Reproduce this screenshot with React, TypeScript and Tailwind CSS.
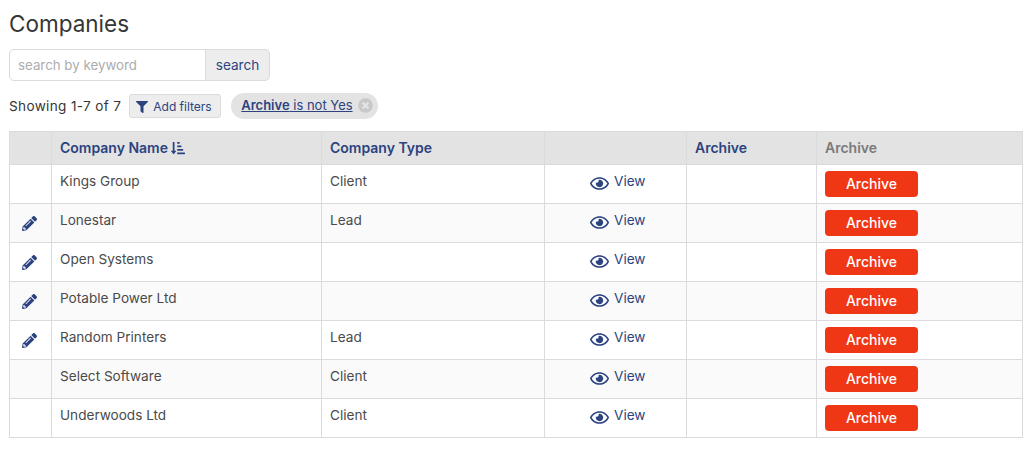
import { FaFilter, FaPencilAlt, FaRegEye, FaSortAmountDownAlt, FaTimesCircle } from 'react-icons/fa';

const companies = [
  { name: 'Kings Group', type: 'Client', edit: false },
  { name: 'Lonestar', type: 'Lead', edit: true },
  { name: 'Open Systems', type: '', edit: true },
  { name: 'Potable Power Ltd', type: '', edit: true },
  { name: 'Random Printers', type: 'Lead', edit: true },
  { name: 'Select Software', type: 'Client', edit: false },
  { name: 'Underwoods Ltd', type: 'Client', edit: false },
];

export default function App() {
  return (
    <div className="w-[1036px] h-[453px] overflow-hidden bg-white px-[9px] pt-[10px] font-['Inter',sans-serif] text-[13.6px] text-[#4a4a4a]">
      {/* Title */}
      <h1 className="text-[22.5px] leading-[28px] font-normal text-[#363636]">Companies</h1>

      {/* Search */}
      <div className="mt-[11px] flex h-[32px] w-[261px]">
        <div className="flex w-[197px] items-center rounded-l-[5px] border border-[#dbdbdb] bg-white pl-[8px] pt-[1px] text-[13.3px] text-[#adadad]">
          search by keyword
        </div>
        <div className="flex flex-1 items-center justify-center rounded-r-[5px] border border-l-0 border-[#dbdbdb] bg-[#ededed] text-[#2c4380]">
          search
        </div>
      </div>

      {/* Filters */}
      <div className="mt-[12px] flex h-[26px] items-center">
        <span className="text-[#363636] tracking-[0.33px]">Showing 1-7 of 7</span>
        <button className="ml-[8px] flex h-[24px] w-[92px] items-center rounded-[3px] border border-[#dbdbdb] bg-[#ededed] pl-[6px] pt-[1px] text-[12px] text-[#2c4380]">
          <FaFilter className="h-[12px] w-[12px]" />
          <span className="ml-[5px]">Add filters</span>
        </button>
        <div className="ml-[10px] flex h-[26px] w-[147px] items-center rounded-full bg-[#e3e3e3] pl-[10px] text-[13px] text-[#2c4380]">
          <span className="underline">
            <b className="font-semibold">Archive</b> is not Yes
          </span>
          <FaTimesCircle className="ml-[5px] mb-[2px] h-[15px] w-[15px] text-[#c8c8c8]" />
        </div>
      </div>

      {/* Table */}
      <table className="mt-[12px] w-[1013px] table-fixed border-collapse border border-[#dbdbdb]">
        <colgroup>
          <col className="w-[42px]" />
          <col className="w-[270px]" />
          <col className="w-[223px]" />
          <col className="w-[142px]" />
          <col className="w-[130px]" />
          <col className="w-[206px]" />
        </colgroup>
        <thead>
          <tr className="h-[33px] bg-[#e3e3e3] text-left text-[14px] text-[#2c4380]">
            <th className="border border-[#dbdbdb]"></th>
            <th className="border border-[#dbdbdb] pb-[1px] pl-[8px] font-semibold">
              <span className="flex items-center">
                Company Name
                <FaSortAmountDownAlt className="ml-[3px] h-[14px] w-[14px]" />
              </span>
            </th>
            <th className="border border-[#dbdbdb] pb-[1px] pl-[8px] font-semibold">Company Type</th>
            <th className="border border-[#dbdbdb]"></th>
            <th className="border border-[#dbdbdb] pb-[1px] pl-[8px] font-semibold">Archive</th>
            <th className="border border-[#dbdbdb] pb-[1px] pl-[8px] font-semibold text-[#7a7a7a]">Archive</th>
          </tr>
        </thead>
        <tbody>
          {companies.map((c, i) => (
            <tr key={c.name} className={`h-[39px] ${i % 2 === 1 ? 'bg-[#fafafa]' : 'bg-white'}`}>
              <td className="border border-[#dbdbdb] text-[#2c4380]">
                {c.edit && <FaPencilAlt className="ml-[12px] mt-[1px] h-[15px] w-[15px]" />}
              </td>
              <td className="border border-[#dbdbdb] pb-[6px] pl-[8px]">{c.name}</td>
              <td className="border border-[#dbdbdb] pb-[6px] pl-[8px]">{c.type}</td>
              <td className="border border-[#dbdbdb] text-[#2c4380]">
                <div className="flex items-start pb-[6px] pl-[45px]">
                  <FaRegEye className="mt-[4px] h-[19px] w-[19px]" />
                  <span className="ml-[5px] mt-[1px] leading-[20px]">View</span>
                </div>
              </td>
              <td className="border border-[#dbdbdb]"></td>
              <td className="border border-[#dbdbdb] pl-[8px]">
                <button className="flex h-[26px] w-[93px] items-center justify-center rounded-[4px] bg-[#ef3615] pb-[1px] text-[14px] font-medium text-white">
                  Archive
                </button>
              </td>
            </tr>
          ))}
        </tbody>
      </table>
    </div>
  );
}
